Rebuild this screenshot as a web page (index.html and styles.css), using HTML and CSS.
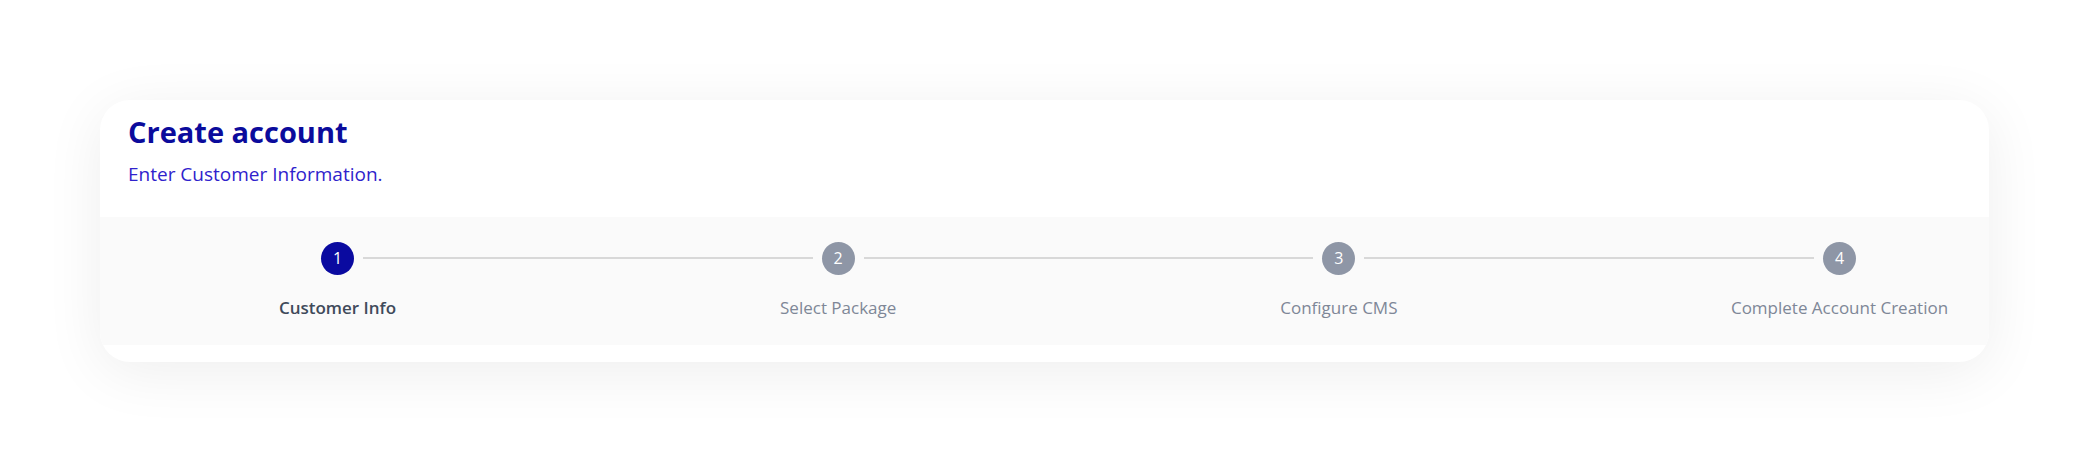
FILE: index.html
```html
<!DOCTYPE html>
<html lang="en">
<head>
    <meta charset="UTF-8">
    <meta name="viewport" content="width=device-width, initial-scale=1.0">
    <title>Create account</title>
    <link rel="stylesheet" href="styles.css">
</head>
<body>
    <div class="card">
        <div class="card-header">
            <h1>Create account</h1>
            <p class="subtitle">Enter Customer Information.</p>
        </div>

        <div class="stepper">
            <div class="step active">
                <span class="step-num">1</span>
                <span class="step-label">Customer Info</span>
            </div>
            <div class="connector"></div>
            <div class="step">
                <span class="step-num">2</span>
                <span class="step-label">Select Package</span>
            </div>
            <div class="connector"></div>
            <div class="step">
                <span class="step-num">3</span>
                <span class="step-label">Configure CMS</span>
            </div>
            <div class="connector"></div>
            <div class="step">
                <span class="step-num">4</span>
                <span class="step-label">Complete Account Creation</span>
            </div>
        </div>
    </div>
</body>
</html>
```

FILE: styles.css
```css
body {
    margin: 0;
    padding: 100px;
    font-family: 'Open Sans', 'Noto Sans', sans-serif;
    background: #ffffff;
}
.card {
    background: #ffffff;
    border-radius: 30px;
    box-shadow: 0 10px 60px rgba(0, 0, 0, 0.07);
    padding-bottom: 17px;
    overflow: hidden;
}
.card-header {
    padding: 12px 28px 30px;
}
h1 {
    margin: 0;
    font-size: 29px;
    font-weight: 700;
    line-height: 40px;
    color: #0b0b9c;
}
.subtitle {
    margin: 9px 0 0;
    font-size: 19px;
    line-height: 26px;
    color: #2f22cc;
}
.stepper {
    display: flex;
    align-items: flex-start;
    background: #fafafa;
    padding: 25px 133px 0 221px;
    height: 103px;
}
.step {
    width: 33px;
    display: flex;
    flex-direction: column;
    align-items: center;
}
.step-num {
    width: 33px;
    height: 33px;
    border-radius: 50%;
    background: #8e96a6;
    color: #ffffff;
    font-size: 16px;
    line-height: 33px;
    text-align: center;
}
.step.active .step-num {
    background: #0a0aa0;
}
.step-label {
    margin-top: 21px;
    white-space: nowrap;
    font-size: 17px;
    color: #7e8797;
}
.step.active .step-label {
    color: #3f4a5a;
    font-weight: 600;
}
.connector {
    flex: 1;
    height: 2px;
    margin: 15px 9px 0;
    background: #d8d8d8;
}
```
